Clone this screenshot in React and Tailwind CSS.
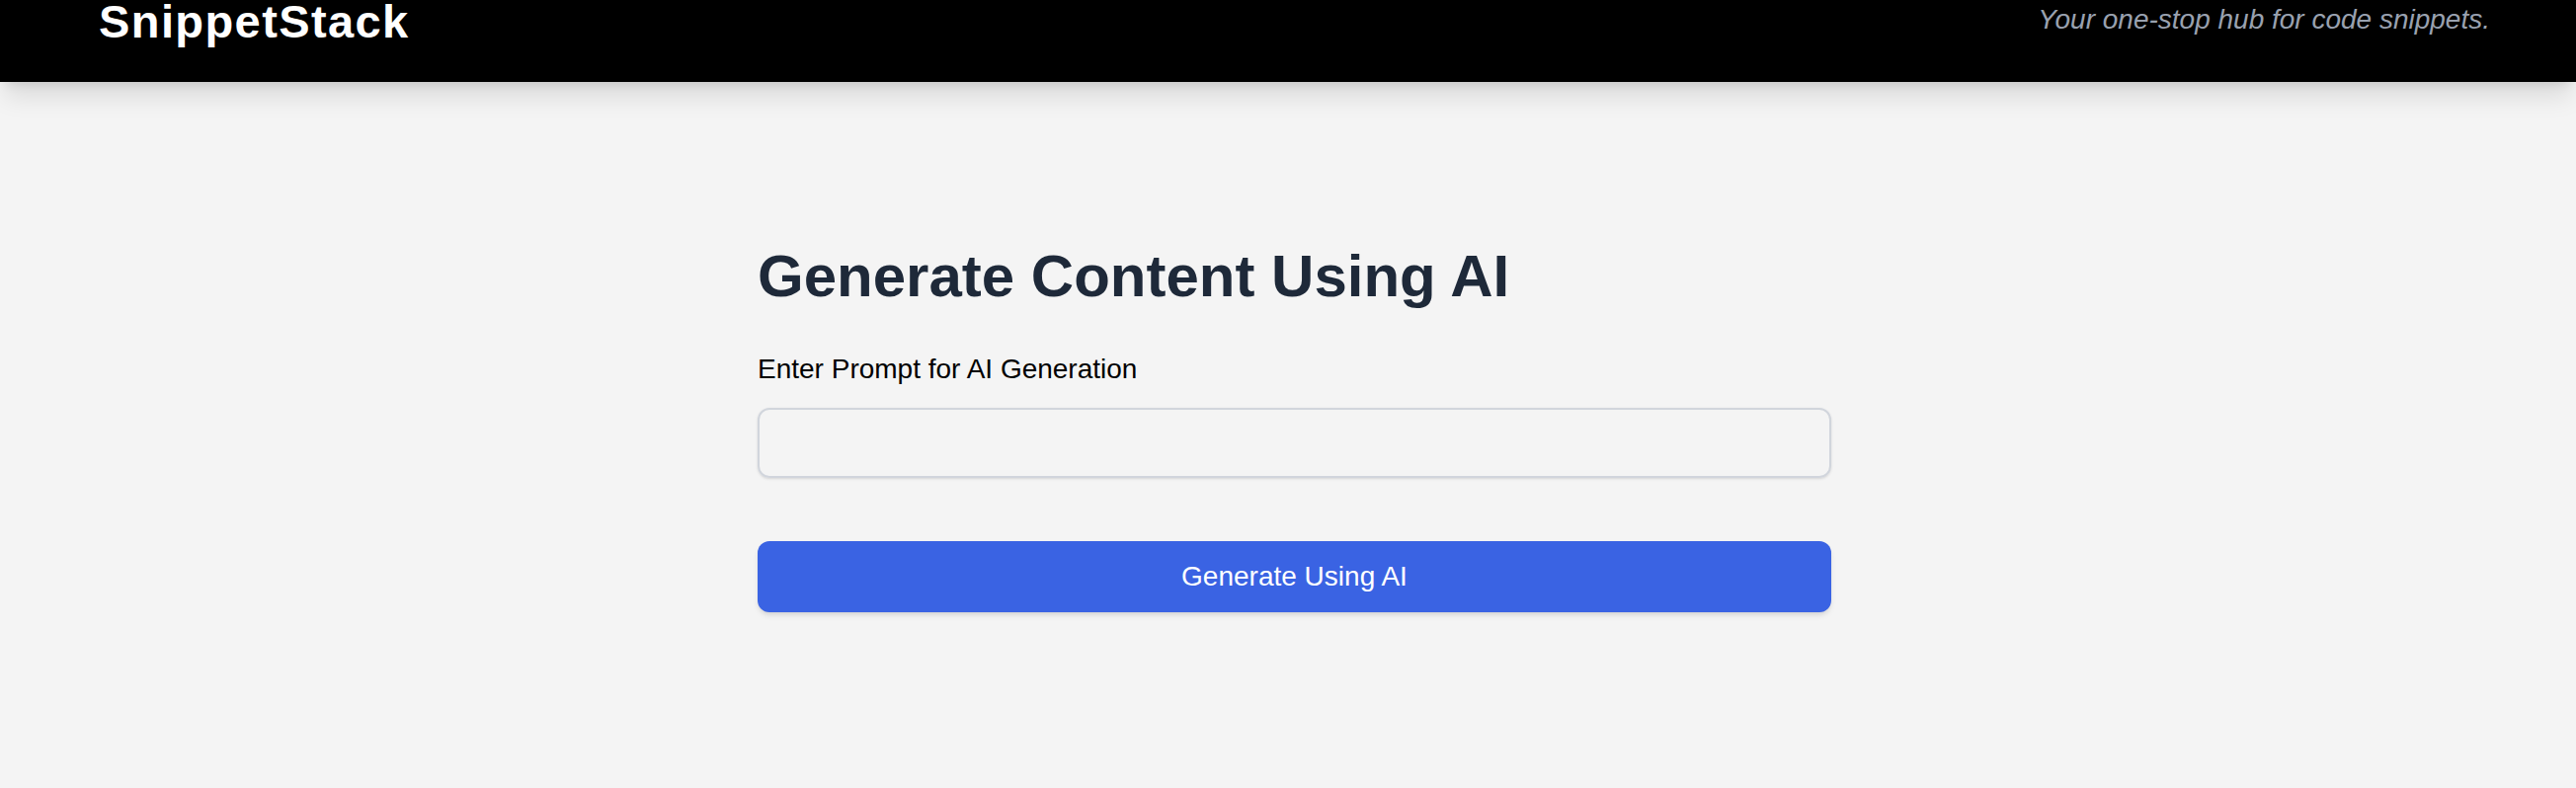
import React, { useState } from "react";

const font = { fontFamily: '"Liberation Sans", Arial, sans-serif' };

const Header = () => (
    <header className="h-[83px] bg-black flex items-start justify-between pl-[100px] pr-[87px] shadow-xl relative z-10">
        <h1 className="text-white font-bold text-[47px] leading-none tracking-[0.03em] -mt-[2px]">
            SnippetStack
        </h1>
        <p className="text-gray-400 italic text-[28px] leading-none mt-[6px]">
            Your one-stop hub for code snippets.
        </p>
    </header>
);

const App = () => {
    const [prompt, setPrompt] = useState("");
    return (
        <div className="min-h-screen bg-[#f4f4f4]" style={font}>
            <Header />
            <main className="flex justify-center pl-[13px] pt-[167px]">
                <div className="w-[1087px]">
                    <h2 className="text-[60px] leading-none font-bold text-gray-800">
                        Generate Content Using AI
                    </h2>
                    <label className="block mt-[44px] text-[28px] leading-[40px] text-black">
                        Enter Prompt for AI Generation
                    </label>
                    <input
                        type="text"
                        value={prompt}
                        onChange={(e) => setPrompt(e.target.value)}
                        className="block w-full h-[71px] mt-[19px] px-6 text-[28px] bg-transparent border-2 border-gray-300 rounded-[12px] shadow-sm outline-none"
                    />
                    <button className="block w-full h-[72px] mt-[64px] bg-[#3a63e3] text-white text-[28px] rounded-[12px] shadow-md">
                        Generate Using AI
                    </button>
                </div>
            </main>
        </div>
    );
};

export default App;
